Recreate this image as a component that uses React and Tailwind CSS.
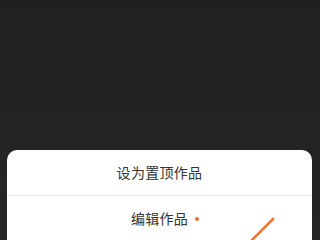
import React from 'react';

const App = () => {
    return (
        <div className="w-[320px] h-[240px] overflow-hidden bg-gradient-to-b from-[#1f2022] to-[#262626] pt-[150px] px-[7px]" style={{ fontFamily: '"Noto Sans CJK SC", "Noto Sans", sans-serif' }}>
            <div className="bg-white rounded-t-[10px] w-[305px]">
                <div className="h-[46px] flex items-center justify-center text-[14px] text-[#333] tracking-[0.3px] border-b border-[#eeeeee]">
                    设为置顶作品
                </div>
                <div className="relative h-[46px] flex items-center justify-center text-[14px] text-[#333] tracking-[0.3px] pb-[2px]">
                    <span className="relative">
                        编辑作品
                        {/* red dot badge */}
                        <span className="absolute right-[-11px] top-[9px] w-[4px] h-[4px] rounded-full bg-[#ef6a32]" />
                    </span>
                    {/* pen stroke peeking in */}
                    <svg className="absolute left-[240px] top-[20px]" width="30" height="26" viewBox="0 0 30 26">
                        <line x1="26" y1="3" x2="4" y2="25" stroke="#f07432" strokeWidth="2.6" strokeLinecap="round" />
                    </svg>
                </div>
            </div>
        </div>
    );
};

export default App;
